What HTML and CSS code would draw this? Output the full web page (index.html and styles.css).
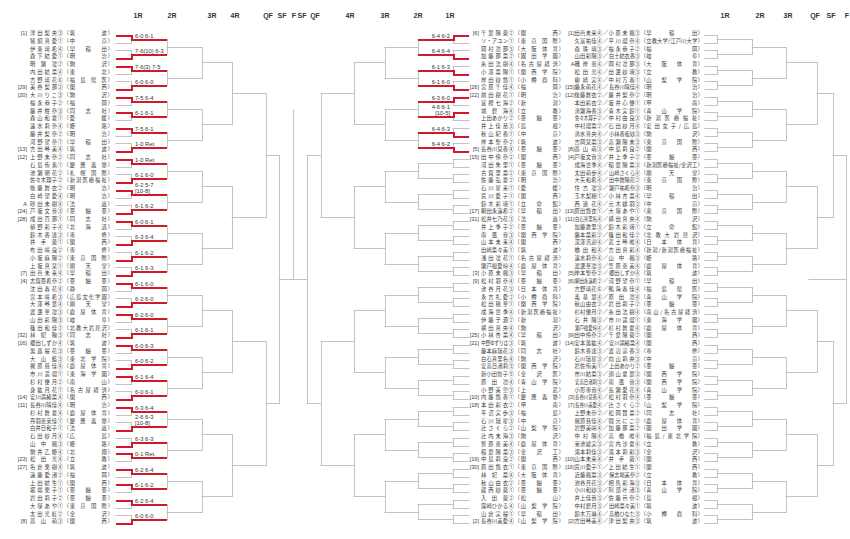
FILE: index.html
```html
<!DOCTYPE html>
<html lang="ja">
<head>
<meta charset="utf-8">
<title>トーナメント表</title>
<link rel="stylesheet" href="styles.css">
</head>
<body>
<main class="sheet">

<ol class="draw draw-left">
<li class="row"><span class="sd">[1]</span><span class="nm">津田梨央</span><span class="gr">③</span><span class="sc">（<span class="sch">筑波</span>）</span></li>
<li class="row"><span class="sd"></span><span class="nm">猪飼真愛</span><span class="gr">①</span><span class="sc">（<span class="sch">中京</span>）</span></li>
<li class="row"><span class="sd"></span><span class="nm">伊東璃希</span><span class="gr">④</span><span class="sc">（<span class="sch">早稲田</span>）</span></li>
<li class="row"><span class="sd"></span><span class="nm">森下結愛</span><span class="gr">①</span><span class="sc">（<span class="sch">明治</span>）</span></li>
<li class="row"><span class="sd"></span><span class="nm">明瀬凜</span><span class="gr">②</span><span class="sc">（<span class="sch">駒沢</span>）</span></li>
<li class="row"><span class="sd"></span><span class="nm">内田結菜</span><span class="gr">④</span><span class="sc">（<span class="sch">東北</span>）</span></li>
<li class="row"><span class="sd"></span><span class="nm">吉野璃花</span><span class="gr">⑥</span><span class="sc">（<span class="sch">福島県医</span>）</span></li>
<li class="row"><span class="sd">[29]</span><span class="nm">美谷梨那</span><span class="gr">③</span><span class="sc">（<span class="sch">関西</span>）</span></li>
<li class="row"><span class="sd">[20]</span><span class="nm">大川りこ</span><span class="gr">③</span><span class="sc">（<span class="sch">駒沢</span>）</span></li>
<li class="row"><span class="sd"></span><span class="nm">福永恭子</span><span class="gr">②</span><span class="sc">（<span class="sch">福岡</span>）</span></li>
<li class="row"><span class="sd"></span><span class="nm">藤井柑奈</span><span class="gr">③</span><span class="sc">（<span class="sch">同志社</span>）</span></li>
<li class="row"><span class="sd"></span><span class="nm">森山和夏</span><span class="gr">①</span><span class="sc">（<span class="sch">愛媛</span>）</span></li>
<li class="row"><span class="sd"></span><span class="nm">速水莉奈</span><span class="gr">④</span><span class="sc">（<span class="sch">姫路</span>）</span></li>
<li class="row"><span class="sd"></span><span class="nm">藤井梨奈</span><span class="gr">②</span><span class="sc">（<span class="sch">明治</span>）</span></li>
<li class="row"><span class="sd"></span><span class="nm">河野望奈</span><span class="gr">①</span><span class="sc">（<span class="sch">早稲田</span>）</span></li>
<li class="row"><span class="sd">[13]</span><span class="nm">吉田琴美</span><span class="gr">④</span><span class="sc">（<span class="sch">筑波</span>）</span></li>
<li class="row"><span class="sd">[12]</span><span class="nm">上野未奈</span><span class="gr">②</span><span class="sc">（<span class="sch">同志社</span>）</span></li>
<li class="row"><span class="sd"></span><span class="nm">石島侑素</span><span class="gr">①</span><span class="sc">（<span class="sch">慶應義塾</span>）</span></li>
<li class="row"><span class="sd"></span><span class="nm">池瀬朝花</span><span class="gr">②</span><span class="sc">（<span class="sch">札幌国際</span>）</span></li>
<li class="row"><span class="sd"></span><span class="nm">佐々木理子</span><span class="gr">②</span><span class="sc">（<span class="sch">新潟医療福祉</span>）</span></li>
<li class="row"><span class="sd"></span><span class="nm">後藤舞衣</span><span class="gr">②</span><span class="sc">（<span class="sch">明治</span>）</span></li>
<li class="row"><span class="sd"></span><span class="nm">白崎望愛</span><span class="gr">④</span><span class="sc">（<span class="sch">明治</span>）</span></li>
<li class="row"><span class="sd">A</span><span class="nm">砂田未樹</span><span class="gr">④</span><span class="sc">（<span class="sch">法政</span>）</span></li>
<li class="row"><span class="sd">[24]</span><span class="nm">戸坂文音</span><span class="gr">③</span><span class="sc">（<span class="sch">亜細亜</span>）</span></li>
<li class="row"><span class="sd">[28]</span><span class="nm">成田百那</span><span class="gr">①</span><span class="sc">（<span class="sch">同志社</span>）</span></li>
<li class="row"><span class="sd"></span><span class="nm">植野彩子</span><span class="gr">④</span><span class="sc">（<span class="sch">北海道</span>）</span></li>
<li class="row"><span class="sd"></span><span class="nm">鈴木香達</span><span class="gr">③</span><span class="sc">（<span class="sch">専修</span>）</span></li>
<li class="row"><span class="sd"></span><span class="nm">井手葵</span><span class="gr">①</span><span class="sc">（<span class="sch">関西</span>）</span></li>
<li class="row"><span class="sd"></span><span class="nm">布田咲良</span><span class="gr">②</span><span class="sc">（<span class="sch">専修</span>）</span></li>
<li class="row"><span class="sd"></span><span class="nm">小坂麻陽</span><span class="gr">②</span><span class="sc">（<span class="sch">東京国際</span>）</span></li>
<li class="row"><span class="sd"></span><span class="nm">上坂真栞</span><span class="gr">①</span><span class="sc">（<span class="sch">順天堂</span>）</span></li>
<li class="row"><span class="sd">[7]</span><span class="nm">田邑未来</span><span class="gr">④</span><span class="sc">（<span class="sch">早稲田</span>）</span></li>
<li class="row"><span class="sd">[4]</span><span class="nm">志賀亜希奈</span><span class="gr">②</span><span class="sc">（<span class="sch">亜細亜</span>）</span></li>
<li class="row"><span class="sd"></span><span class="nm">沈田春花</span><span class="gr">④</span><span class="sc">（<span class="sch">静岡</span>）</span></li>
<li class="row"><span class="sd"></span><span class="nm">宮本咲希</span><span class="gr">③</span><span class="sc">（<span class="sch">広島文化学園</span>）</span></li>
<li class="row"><span class="sd"></span><span class="nm">大澤琴葉</span><span class="gr">④</span><span class="sc">（<span class="sch">順天堂</span>）</span></li>
<li class="row"><span class="sd"></span><span class="nm">渡邊華凜</span><span class="gr">③</span><span class="sc">（<span class="sch">鹿屋体育</span>）</span></li>
<li class="row"><span class="sd"></span><span class="nm">山田彩陽</span><span class="gr">③</span><span class="sc">（<span class="sch">岐阜</span>）</span></li>
<li class="row"><span class="sd"></span><span class="nm">篠田和佳</span><span class="gr">②</span><span class="sc">（<span class="sch">北教大岩見沢</span>）</span></li>
<li class="row"><span class="sd">[32]</span><span class="nm">林妃鞠</span><span class="gr">③</span><span class="sc">（<span class="sch">同志社</span>）</span></li>
<li class="row"><span class="sd">[16]</span><span class="nm">櫻田しずか</span><span class="gr">④</span><span class="sc">（<span class="sch">筑波</span>）</span></li>
<li class="row"><span class="sd"></span><span class="nm">萬蕗桜花</span><span class="gr">③</span><span class="sc">（<span class="sch">亜細亜</span>）</span></li>
<li class="row"><span class="sd"></span><span class="nm">大山藍</span><span class="gr">③</span><span class="sc">（<span class="sch">東北学院</span>）</span></li>
<li class="row"><span class="sd"></span><span class="nm">梶原慈佳</span><span class="gr">④</span><span class="sc">（<span class="sch">鹿屋体育</span>）</span></li>
<li class="row"><span class="sd"></span><span class="nm">市川遥瑠</span><span class="gr">①</span><span class="sc">（<span class="sch">東海学園</span>）</span></li>
<li class="row"><span class="sd"></span><span class="nm">杉村優月</span><span class="gr">②</span><span class="sc">（<span class="sch">南山</span>）</span></li>
<li class="row"><span class="sd"></span><span class="nm">身紘月花</span><span class="gr">①</span><span class="sc">（<span class="sch">名古屋経済</span>）</span></li>
<li class="row"><span class="sd">[14]</span><span class="nm">安川満緒菜</span><span class="gr">④</span><span class="sc">（<span class="sch">関西</span>）</span></li>
<li class="row"><span class="sd">[11]</span><span class="nm">長谷川晴佳</span><span class="gr">④</span><span class="sc">（<span class="sch">明治</span>）</span></li>
<li class="row"><span class="sd"></span><span class="nm">杉村舞夏</span><span class="gr">④</span><span class="sc">（<span class="sch">鹿屋体育</span>）</span></li>
<li class="row"><span class="sd"></span><span class="nm">丹羽恵茉佳</span><span class="gr">①</span><span class="sc">（<span class="sch">慶應義塾</span>）</span></li>
<li class="row"><span class="sd"></span><span class="nm">白井日和子</span><span class="gr">①</span><span class="sc">（<span class="sch">法政</span>）</span></li>
<li class="row"><span class="sd"></span><span class="nm">石田紗月</span><span class="gr">④</span><span class="sc">（<span class="sch">広島</span>）</span></li>
<li class="row"><span class="sd"></span><span class="nm">山中楓</span><span class="gr">③</span><span class="sc">（<span class="sch">姫路</span>）</span></li>
<li class="row"><span class="sd"></span><span class="nm">駒井乙姫</span><span class="gr">④</span><span class="sc">（<span class="sch">北翔</span>）</span></li>
<li class="row"><span class="sd">[23]</span><span class="nm">松田光</span><span class="gr">④</span><span class="sc">（<span class="sch">立教</span>）</span></li>
<li class="row"><span class="sd">[27]</span><span class="nm">名倉栗樹</span><span class="gr">④</span><span class="sc">（<span class="sch">筑波</span>）</span></li>
<li class="row"><span class="sd"></span><span class="nm">遠藤愛渚</span><span class="gr">②</span><span class="sc">（<span class="sch">福岡</span>）</span></li>
<li class="row"><span class="sd"></span><span class="nm">上田結生</span><span class="gr">①</span><span class="sc">（<span class="sch">関西</span>）</span></li>
<li class="row"><span class="sd"></span><span class="nm">堀端栗子</span><span class="gr">①</span><span class="sc">（<span class="sch">亜細亜</span>）</span></li>
<li class="row"><span class="sd"></span><span class="nm">岩田莉子</span><span class="gr">②</span><span class="sc">（<span class="sch">亜細亜</span>）</span></li>
<li class="row"><span class="sd"></span><span class="nm">大塚あや</span><span class="gr">①</span><span class="sc">（<span class="sch">東京国際</span>）</span></li>
<li class="row"><span class="sd"></span><span class="nm">太田光紅</span><span class="gr">②</span><span class="sc">（<span class="sch">金沢</span>）</span></li>
<li class="row"><span class="sd">[8]</span><span class="nm">髙山萌</span><span class="gr">③</span><span class="sc">（<span class="sch">関西</span>）</span></li>
</ol>

<svg class="lines lines-main" id="main-lines" width="338" height="539" viewBox="114 0 338 539">
  <g class="rounds">
    <text x="138" y="18">1R</text><text x="172" y="18">2R</text><text x="212" y="18">3R</text><text x="235" y="18">4R</text>
    <text x="268" y="18">QF</text><text x="282" y="18">SF</text><text x="294" y="18">F</text><text x="302" y="18">SF</text>
    <text x="315" y="18">QF</text><text x="350" y="18">4R</text><text x="385" y="18">3R</text><text x="418" y="18">2R</text><text x="450" y="18">1R</text>
  </g>
  <g class="grid" data-stub="116" data-xs="131,167,202,232,266,279,293"></g>
  <g class="grid" data-stub="469" data-xs="453,418,385,354,321,307,293"></g>
  <path class="gl" d="M293.5 110V279.5"/>
  <g class="win"></g>
  <g class="scores" data-stub="116" data-x0="131" data-x1="167">
    <text x="135" data-m="0" data-w="0">6-0 6-1</text>
    <text x="135" data-m="1" data-w="1">7-6(10) 6-3</text>
    <text x="135" data-m="2" data-w="0">7-6(3) 7-5</text>
    <text x="135" data-m="3" data-w="1">6-0 6-0</text>
    <text x="135" data-m="4" data-w="0">7-5 6-4</text>
    <text x="135" data-m="5" data-w="0">6-1 6-1</text>
    <text x="135" data-m="6" data-w="0">7-5 6-1</text>
    <text x="135" data-m="7" data-w="1">1-0 Ret.</text>
    <text x="135" data-m="8" data-w="0">1-0 Ret.</text>
    <text x="135" data-m="9" data-w="1">6-1 6-0</text>
    <text x="135" data-m="10" data-w="0"><tspan>6-2 5-7</tspan><tspan>[10-8]</tspan></text>
    <text x="135" data-m="11" data-w="1">6-1 6-2</text>
    <text x="135" data-m="12" data-w="0">6-0 6-1</text>
    <text x="135" data-m="13" data-w="1">6-3 6-4</text>
    <text x="135" data-m="14" data-w="1">6-1 6-2</text>
    <text x="135" data-m="15" data-w="1">6-1 6-3</text>
    <text x="135" data-m="16" data-w="0">6-1 6-0</text>
    <text x="135" data-m="17" data-w="1">6-2 6-0</text>
    <text x="135" data-m="18" data-w="0">6-2 6-0</text>
    <text x="135" data-m="19" data-w="1">6-1 6-1</text>
    <text x="135" data-m="20" data-w="0">6-0 6-3</text>
    <text x="135" data-m="21" data-w="1">6-0 6-2</text>
    <text x="135" data-m="22" data-w="0">6-1 6-4</text>
    <text x="135" data-m="23" data-w="1">6-0 6-1</text>
    <text x="135" data-m="24" data-w="0">6-3 6-4</text>
    <text x="135" data-m="25" data-w="1"><tspan>2-6 6-3</tspan><tspan>[10-8]</tspan></text>
    <text x="135" data-m="26" data-w="1">6-3 6-3</text>
    <text x="135" data-m="27" data-w="0">0-1 Ret.</text>
    <text x="135" data-m="28" data-w="0">6-2 6-4</text>
    <text x="135" data-m="29" data-w="0">6-1 6-2</text>
    <text x="135" data-m="30" data-w="0">6-2 6-4</text>
    <text x="135" data-m="31" data-w="1">6-0 6-0</text>
  </g>
  <g class="scores scores-end" data-stub="469" data-x0="453" data-x1="418">
    <text x="450" data-m="0" data-w="0">6-4 6-2</text>
    <text x="450" data-m="1" data-w="1">6-4 6-4</text>
    <text x="450" data-m="2" data-w="1">6-1 6-3</text>
    <text x="450" data-m="3" data-w="1">6-1 6-0</text>
    <text x="450" data-m="4" data-w="0">6-3 6-0</text>
    <text x="450" data-m="5" data-w="0"><tspan>4-6 6-1</tspan><tspan>[10-5]</tspan></text>
    <text x="450" data-m="6" data-w="1">6-4 6-3</text>
    <text x="450" data-m="7" data-w="1">6-4 6-2</text>
  </g>
</svg>

<ol class="draw draw-mid">
<li class="row"><span class="sd">[6]</span><span class="nm">千葉陽葵</span><span class="gr">②</span><span class="sc">（<span class="sch">関西</span>）</span></li>
<li class="row"><span class="sd"></span><span class="nm">ソ・アユン</span><span class="gr">①</span><span class="sc">（<span class="sch">東京国際</span>）</span></li>
<li class="row"><span class="sd"></span><span class="nm">岡村凛那</span><span class="gr">③</span><span class="sc">（<span class="sch">大阪体育</span>）</span></li>
<li class="row"><span class="sd"></span><span class="nm">加藤那菜</span><span class="gr">②</span><span class="sc">（<span class="sch">園田学園</span>）</span></li>
<li class="row"><span class="sd"></span><span class="nm">糸田法樹</span><span class="gr">④</span><span class="sc">（<span class="sch">名古屋経済</span>）</span></li>
<li class="row"><span class="sd"></span><span class="nm">小澤菜陽</span><span class="gr">①</span><span class="sc">（<span class="sch">関西学院</span>）</span></li>
<li class="row"><span class="sd"></span><span class="nm">岸田紗悠</span><span class="gr">①</span><span class="sc">（<span class="sch">小樽商科</span>）</span></li>
<li class="row"><span class="sd">[26]</span><span class="nm">宮原千佳</span><span class="gr">④</span><span class="sc">（<span class="sch">福岡</span>）</span></li>
<li class="row"><span class="sd">[22]</span><span class="nm">前田樹花</span><span class="gr">①</span><span class="sc">（<span class="sch">明治</span>）</span></li>
<li class="row"><span class="sd"></span><span class="nm">富樫七海</span><span class="gr">②</span><span class="sc">（<span class="sch">新潟</span>）</span></li>
<li class="row"><span class="sd"></span><span class="nm">城碧海</span><span class="gr">④</span><span class="sc">（<span class="sch">立教</span>）</span></li>
<li class="row"><span class="sd"></span><span class="nm">上田あかり</span><span class="gr">②</span><span class="sc">（<span class="sch">亜細亜</span>）</span></li>
<li class="row"><span class="sd"></span><span class="nm">井上佳苗</span><span class="gr">③</span><span class="sc">（<span class="sch">島根</span>）</span></li>
<li class="row"><span class="sd"></span><span class="nm">秋山紀香</span><span class="gr">①</span><span class="sc">（<span class="sch">中京</span>）</span></li>
<li class="row"><span class="sd"></span><span class="nm">岸本聖奈</span><span class="gr">②</span><span class="sc">（<span class="sch">筑波</span>）</span></li>
<li class="row"><span class="sd">[5]</span><span class="nm">長谷川栞香</span><span class="gr">④</span><span class="sc">（<span class="sch">亜細亜</span>）</span></li>
<li class="row"><span class="sd">[15]</span><span class="nm">田中伶奈</span><span class="gr">②</span><span class="sc">（<span class="sch">関西</span>）</span></li>
<li class="row"><span class="sd"></span><span class="nm">河田朱里</span><span class="gr">①</span><span class="sc">（<span class="sch">亜細亜</span>）</span></li>
<li class="row"><span class="sd"></span><span class="nm">古賀里菜</span><span class="gr">②</span><span class="sc">（<span class="sch">東京国際</span>）</span></li>
<li class="row"><span class="sd"></span><span class="nm">佐藤弘夏</span><span class="gr">②</span><span class="sc">（<span class="sch">明治</span>）</span></li>
<li class="row"><span class="sd"></span><span class="nm">石川星来</span><span class="gr">①</span><span class="sc">（<span class="sch">愛媛</span>）</span></li>
<li class="row"><span class="sd"></span><span class="nm">荒川愛子</span><span class="gr">①</span><span class="sc">（<span class="sch">関西</span>）</span></li>
<li class="row"><span class="sd"></span><span class="nm">鈴木彩瑛</span><span class="gr">①</span><span class="sc">（<span class="sch">立命館</span>）</span></li>
<li class="row"><span class="sd">[17]</span><span class="nm">網田永遠希</span><span class="gr">②</span><span class="sc">（<span class="sch">早稲田</span>）</span></li>
<li class="row"><span class="sd">[31]</span><span class="nm">松井七乃花</span><span class="gr">③</span><span class="sc">（<span class="sch">法政</span>）</span></li>
<li class="row"><span class="sd"></span><span class="nm">井上季子</span><span class="gr">②</span><span class="sc">（<span class="sch">亜細亜</span>）</span></li>
<li class="row"><span class="sd"></span><span class="nm">南風音</span><span class="gr">③</span><span class="sc">（<span class="sch">関西学院</span>）</span></li>
<li class="row"><span class="sd"></span><span class="nm">山本未来</span><span class="gr">④</span><span class="sc">（<span class="sch">関西</span>）</span></li>
<li class="row"><span class="sd"></span><span class="nm">田崎菜々美</span><span class="gr">①</span><span class="sc">（<span class="sch">筑波</span>）</span></li>
<li class="row"><span class="sd"></span><span class="nm">浅田凜花</span><span class="gr">①</span><span class="sc">（<span class="sch">名古屋経済</span>）</span></li>
<li class="row"><span class="sd"></span><span class="nm">瀬戸根愛玲</span><span class="gr">④</span><span class="sc">（<span class="sch">鹿屋体育</span>）</span></li>
<li class="row"><span class="sd">[3]</span><span class="nm">小原未楓</span><span class="gr">③</span><span class="sc">（<span class="sch">早稲田</span>）</span></li>
<li class="row"><span class="sd">[9]</span><span class="nm">松村羽奈</span><span class="gr">④</span><span class="sc">（<span class="sch">亜細亜</span>）</span></li>
<li class="row"><span class="sd"></span><span class="nm">池谷月花</span><span class="gr">③</span><span class="sc">（<span class="sch">日本体育</span>）</span></li>
<li class="row"><span class="sd"></span><span class="nm">永吉礼愛</span><span class="gr">②</span><span class="sc">（<span class="sch">小樽商科</span>）</span></li>
<li class="row"><span class="sd"></span><span class="nm">松田穂華</span><span class="gr">①</span><span class="sc">（<span class="sch">関西学院</span>）</span></li>
<li class="row"><span class="sd"></span><span class="nm">成海世季</span><span class="gr">④</span><span class="sc">（<span class="sch">新潟医療福祉</span>）</span></li>
<li class="row"><span class="sd"></span><span class="nm">伊藤于源</span><span class="gr">②</span><span class="sc">（<span class="sch">新潟</span>）</span></li>
<li class="row"><span class="sd"></span><span class="nm">横田真央</span><span class="gr">④</span><span class="sc">（<span class="sch">駒沢</span>）</span></li>
<li class="row"><span class="sd">[25]</span><span class="nm">小林杏菜</span><span class="gr">④</span><span class="sc">（<span class="sch">早稲田</span>）</span></li>
<li class="row"><span class="sd">[21]</span><span class="nm">中野ゆずりは</span><span class="gr">③</span><span class="sc">（<span class="sch">筑波</span>）</span></li>
<li class="row"><span class="sd"></span><span class="nm">藤本麻瑞花</span><span class="gr">③</span><span class="sc">（<span class="sch">同志社</span>）</span></li>
<li class="row"><span class="sd"></span><span class="nm">白石真里名</span><span class="gr">④</span><span class="sc">（<span class="sch">駒沢</span>）</span></li>
<li class="row"><span class="sd"></span><span class="nm">安高日渚莉</span><span class="gr">③</span><span class="sc">（<span class="sch">関西学院</span>）</span></li>
<li class="row"><span class="sd"></span><span class="nm">新小田智子</span><span class="gr">⑤</span><span class="sc">（<span class="sch">金沢医</span>）</span></li>
<li class="row"><span class="sd"></span><span class="nm">原田凛</span><span class="gr">④</span><span class="sc">（<span class="sch">青山学院</span>）</span></li>
<li class="row"><span class="sd"></span><span class="nm">小野美空</span><span class="gr">③</span><span class="sc">（<span class="sch">上武</span>）</span></li>
<li class="row"><span class="sd">[10]</span><span class="nm">内藤悠香</span><span class="gr">①</span><span class="sc">（<span class="sch">慶應義塾</span>）</span></li>
<li class="row"><span class="sd">[18]</span><span class="nm">本田彩衣</span><span class="gr">②</span><span class="sc">（<span class="sch">甲南</span>）</span></li>
<li class="row"><span class="sd"></span><span class="nm">平沼実歩</span><span class="gr">③</span><span class="sc">（<span class="sch">福島</span>）</span></li>
<li class="row"><span class="sd"></span><span class="nm">石川瑞星</span><span class="gr">③</span><span class="sc">（<span class="sch">中京</span>）</span></li>
<li class="row"><span class="sd"></span><span class="nm">辻さくら</span><span class="gr">②</span><span class="sc">（<span class="sch">山梨学院</span>）</span></li>
<li class="row"><span class="sd"></span><span class="nm">辻内未海</span><span class="gr">③</span><span class="sc">（<span class="sch">駒沢</span>）</span></li>
<li class="row"><span class="sd"></span><span class="nm">笹原恵美</span><span class="gr">④</span><span class="sc">（<span class="sch">鹿屋体育</span>）</span></li>
<li class="row"><span class="sd"></span><span class="nm">稲葉陽菜</span><span class="gr">③</span><span class="sc">（<span class="sch">金沢工</span>）</span></li>
<li class="row"><span class="sd">[19]</span><span class="nm">中島莉良</span><span class="gr">②</span><span class="sc">（<span class="sch">関西</span>）</span></li>
<li class="row"><span class="sd">[30]</span><span class="nm">原田悠衣</span><span class="gr">①</span><span class="sc">（<span class="sch">東京国際</span>）</span></li>
<li class="row"><span class="sd"></span><span class="nm">林妃菜</span><span class="gr">④</span><span class="sc">（<span class="sch">大阪体育</span>）</span></li>
<li class="row"><span class="sd"></span><span class="nm">秋山由衣</span><span class="gr">②</span><span class="sc">（<span class="sch">亜細亜</span>）</span></li>
<li class="row"><span class="sd"></span><span class="nm">蔵西紗葵</span><span class="gr">①</span><span class="sc">（<span class="sch">亜細亜</span>）</span></li>
<li class="row"><span class="sd"></span><span class="nm">入田葵</span><span class="gr">②</span><span class="sc">（<span class="sch">松山</span>）</span></li>
<li class="row"><span class="sd"></span><span class="nm">露崎ひかる</span><span class="gr">④</span><span class="sc">（<span class="sch">山梨学院</span>）</span></li>
<li class="row"><span class="sd"></span><span class="nm">山倉実桜</span><span class="gr">①</span><span class="sc">（<span class="sch">早稲田</span>）</span></li>
<li class="row"><span class="sd">[2]</span><span class="nm">長谷川美愛</span><span class="gr">④</span><span class="sc">（<span class="sch">山梨学院</span>）</span></li>
</ol>

<ol class="draw draw-dbl">
<li class="row"><span class="sd">[1]</span><span class="nm">田邑未来</span><span class="gr">④</span><span class="sl">／</span><span class="nm nm2">小原未楓</span><span class="gr">③</span><span class="sc">（<span class="sch">早稲田</span>）</span></li>
<li class="row"><span class="sd"></span><span class="nm">久富祐佳</span><span class="gr">④</span><span class="sl">／</span><span class="nm nm2">平川瑠奈</span><span class="gr">④</span><span class="sc">（<span class="sch">立教大学/江戸川大学</span>）</span></li>
<li class="row"><span class="sd"></span><span class="nm">森珠璃</span><span class="gr">③</span><span class="sl">／</span><span class="nm nm2">福永恭子</span><span class="gr">②</span><span class="sc">（<span class="sch">福岡</span>）</span></li>
<li class="row"><span class="sd"></span><span class="nm">山田彩陽</span><span class="gr">③</span><span class="sl">／</span><span class="nm nm2">白土結衣香</span><span class="gr">③</span><span class="sc">（<span class="sch">岐阜</span>）</span></li>
<li class="row"><span class="sd">A</span><span class="nm">磯岸恵</span><span class="gr">④</span><span class="sl">／</span><span class="nm nm2">岡村凛那</span><span class="gr">③</span><span class="sc">（<span class="sch">大阪体育</span>）</span></li>
<li class="row"><span class="sd"></span><span class="nm">松田光</span><span class="gr">④</span><span class="sl">／</span><span class="nm nm2">田邊紗瑛</span><span class="gr">③</span><span class="sc">（<span class="sch">立教</span>）</span></li>
<li class="row"><span class="sd"></span><span class="nm">柳綺実</span><span class="gr">④</span><span class="sl">／</span><span class="nm nm2">中村万春</span><span class="gr">①</span><span class="sc">（<span class="sch">山梨学院</span>）</span></li>
<li class="row"><span class="sd">[15]</span><span class="nm">藤永萌花</span><span class="gr">④</span><span class="sl">／</span><span class="nm nm2">長谷川晴佳</span><span class="gr">④</span><span class="sc">（<span class="sch">明治</span>）</span></li>
<li class="row"><span class="sd">[12]</span><span class="nm">後藤舞衣</span><span class="gr">②</span><span class="sl">／</span><span class="nm nm2">藤井梨奈</span><span class="gr">②</span><span class="sc">（<span class="sch">明治</span>）</span></li>
<li class="row"><span class="sd"></span><span class="nm">本田彩衣</span><span class="gr">②</span><span class="sl">／</span><span class="nm nm2">坂井心優</span><span class="gr">①</span><span class="sc">（<span class="sch">甲南</span>）</span></li>
<li class="row"><span class="sd"></span><span class="nm">清瀬海香</span><span class="gr">③</span><span class="sl">／</span><span class="nm nm2">青木実鈴</span><span class="gr">①</span><span class="sc">（<span class="sch">青山学院</span>）</span></li>
<li class="row"><span class="sd"></span><span class="nm">佐々木理子</span><span class="gr">②</span><span class="sl">／</span><span class="nm nm2">中村由良</span><span class="gr">③</span><span class="sc">（<span class="sch">新潟医療福祉</span>）</span></li>
<li class="row"><span class="sd"></span><span class="nm">中村瑠菜</span><span class="gr">②</span><span class="sl">／</span><span class="nm nm2">石田紗月</span><span class="gr">④</span><span class="sc">（<span class="sch">安田女子/広島</span>）</span></li>
<li class="row"><span class="sd"></span><span class="nm">清水真央</span><span class="gr">④</span><span class="sl">／</span><span class="nm nm2">小林香蜜紗</span><span class="gr">③</span><span class="sc">（<span class="sch">駒沢</span>）</span></li>
<li class="row"><span class="sd"></span><span class="nm">吉岡栞菜</span><span class="gr">③</span><span class="sl">／</span><span class="nm nm2">高瀬陽未</span><span class="gr">③</span><span class="sc">（<span class="sch">東京国際</span>）</span></li>
<li class="row"><span class="sd">[8]</span><span class="nm">髙山萌</span><span class="gr">③</span><span class="sl">／</span><span class="nm nm2">中島莉良</span><span class="gr">②</span><span class="sc">（<span class="sch">関西</span>）</span></li>
<li class="row"><span class="sd">[4]</span><span class="nm">戸坂文音</span><span class="gr">③</span><span class="sl">／</span><span class="nm nm2">井上季子</span><span class="gr">②</span><span class="sc">（<span class="sch">亜細亜</span>）</span></li>
<li class="row"><span class="sd"></span><span class="nm">成海世季</span><span class="gr">④</span><span class="sl">／</span><span class="nm nm2">稲葉陽菜</span><span class="gr">③</span><span class="sc">（<span class="sch">新潟医療福祉/金沢工</span>）</span></li>
<li class="row"><span class="sd"></span><span class="nm">太田萌歩</span><span class="gr">④</span><span class="sl">／</span><span class="nm nm2">山崎さくら</span><span class="gr">④</span><span class="sc">（<span class="sch">順天堂</span>）</span></li>
<li class="row"><span class="sd"></span><span class="nm">大矢和希</span><span class="gr">④</span><span class="sl">／</span><span class="nm nm2">田中舞陽花</span><span class="gr">②</span><span class="sc">（<span class="sch">東京国際</span>）</span></li>
<li class="row"><span class="sd"></span><span class="nm">住吉凜</span><span class="gr">③</span><span class="sl">／</span><span class="nm nm2">瀬戸祐希奈</span><span class="gr">③</span><span class="sc">（<span class="sch">明治</span>）</span></li>
<li class="row"><span class="sd"></span><span class="nm">玉木梨穂</span><span class="gr">①</span><span class="sl">／</span><span class="nm nm2">小林杏菜</span><span class="gr">④</span><span class="sc">（<span class="sch">早稲田</span>）</span></li>
<li class="row"><span class="sd"></span><span class="nm">西連花</span><span class="gr">④</span><span class="sl">／</span><span class="nm nm2">元木緋羽</span><span class="gr">③</span><span class="sc">（<span class="sch">中京</span>）</span></li>
<li class="row"><span class="sd">[13]</span><span class="nm">原田悠衣</span><span class="gr">①</span><span class="sl">／</span><span class="nm nm2">大塚あや</span><span class="gr">①</span><span class="sc">（<span class="sch">東京国際</span>）</span></li>
<li class="row"><span class="sd">[11]</span><span class="nm">白石真里名</span><span class="gr">④</span><span class="sl">／</span><span class="nm nm2">横田真央</span><span class="gr">④</span><span class="sc">（<span class="sch">駒沢</span>）</span></li>
<li class="row"><span class="sd"></span><span class="nm">加藤歌里</span><span class="gr">③</span><span class="sl">／</span><span class="nm nm2">鈴木彩瑛</span><span class="gr">①</span><span class="sc">（<span class="sch">立命館</span>）</span></li>
<li class="row"><span class="sd"></span><span class="nm">藤本菜彩</span><span class="gr">②</span><span class="sl">／</span><span class="nm nm2">篠田和佳</span><span class="gr">②</span><span class="sc">（<span class="sch">北教大岩見沢</span>）</span></li>
<li class="row"><span class="sd"></span><span class="nm">深澤汎迎</span><span class="gr">④</span><span class="sl">／</span><span class="nm nm2">武士琴唯</span><span class="gr">④</span><span class="sc">（<span class="sch">日本体育</span>）</span></li>
<li class="row"><span class="sd"></span><span class="nm">橋田和</span><span class="gr">④</span><span class="sl">／</span><span class="nm nm2">吉田真彩</span><span class="gr">④</span><span class="sc">（<span class="sch">新潟/新潟医療福祉</span>）</span></li>
<li class="row"><span class="sd"></span><span class="nm">速水莉奈</span><span class="gr">④</span><span class="sl">／</span><span class="nm nm2">山中楓</span><span class="gr">③</span><span class="sc">（<span class="sch">姫路</span>）</span></li>
<li class="row"><span class="sd"></span><span class="nm">渡邊華凜</span><span class="gr">③</span><span class="sl">／</span><span class="nm nm2">笠原恵美</span><span class="gr">④</span><span class="sc">（<span class="sch">鹿屋体育</span>）</span></li>
<li class="row"><span class="sd">[5]</span><span class="nm">岸本聖奈</span><span class="gr">②</span><span class="sl">／</span><span class="nm nm2">櫻田しずか</span><span class="gr">④</span><span class="sc">（<span class="sch">筑波</span>）</span></li>
<li class="row"><span class="sd">[6]</span><span class="nm">網田永遠希</span><span class="gr">②</span><span class="sl">／</span><span class="nm nm2">河野望奈</span><span class="gr">①</span><span class="sc">（<span class="sch">早稲田</span>）</span></li>
<li class="row"><span class="sd"></span><span class="nm">吉野璃花</span><span class="gr">⑥</span><span class="sl">／</span><span class="nm nm2">鴨海春佳</span><span class="gr">④</span><span class="sc">（<span class="sch">福島県医</span>）</span></li>
<li class="row"><span class="sd"></span><span class="nm">義基慧</span><span class="gr">④</span><span class="sl">／</span><span class="nm nm2">原田凛</span><span class="gr">④</span><span class="sc">（<span class="sch">青山学院</span>）</span></li>
<li class="row"><span class="sd"></span><span class="nm">秋山由衣</span><span class="gr">②</span><span class="sl">／</span><span class="nm nm2">岩田莉子</span><span class="gr">②</span><span class="sc">（<span class="sch">亜細亜</span>）</span></li>
<li class="row"><span class="sd"></span><span class="nm">杉村優月</span><span class="gr">②</span><span class="sl">／</span><span class="nm nm2">糸田法樹</span><span class="gr">④</span><span class="sc">（<span class="sch">南山/名古屋経済</span>）</span></li>
<li class="row"><span class="sd"></span><span class="nm">石井陽</span><span class="gr">③</span><span class="sl">／</span><span class="nm nm2">市川遥瑠</span><span class="gr">①</span><span class="sc">（<span class="sch">東海学園</span>）</span></li>
<li class="row"><span class="sd"></span><span class="nm">瀬戸根愛玲</span><span class="gr">④</span><span class="sl">／</span><span class="nm nm2">杉村舞夏</span><span class="gr">④</span><span class="sc">（<span class="sch">鹿屋体育</span>）</span></li>
<li class="row"><span class="sd">[9]</span><span class="nm">田中伶奈</span><span class="gr">②</span><span class="sl">／</span><span class="nm nm2">千葉陽葵</span><span class="gr">②</span><span class="sc">（<span class="sch">関西</span>）</span></li>
<li class="row"><span class="sd">[14]</span><span class="nm">安本萬紘</span><span class="gr">④</span><span class="sl">／</span><span class="nm nm2">安川満緒菜</span><span class="gr">④</span><span class="sc">（<span class="sch">関西</span>）</span></li>
<li class="row"><span class="sd"></span><span class="nm">鈴木香達</span><span class="gr">③</span><span class="sl">／</span><span class="nm nm2">渡辺涼香</span><span class="gr">③</span><span class="sc">（<span class="sch">専修</span>）</span></li>
<li class="row"><span class="sd"></span><span class="nm">石川瑞星</span><span class="gr">③</span><span class="sl">／</span><span class="nm nm2">向山莉央</span><span class="gr">③</span><span class="sc">（<span class="sch">中京</span>）</span></li>
<li class="row"><span class="sd"></span><span class="nm">岩佐侑美</span><span class="gr">①</span><span class="sl">／</span><span class="nm nm2">上田あかり</span><span class="gr">②</span><span class="sc">（<span class="sch">亜細亜</span>）</span></li>
<li class="row"><span class="sd"></span><span class="nm">市川結菜</span><span class="gr">③</span><span class="sl">／</span><span class="nm nm2">須山夏葉</span><span class="gr">③</span><span class="sc">（<span class="sch">関西学院</span>）</span></li>
<li class="row"><span class="sd"></span><span class="nm">安高日渚莉</span><span class="gr">③</span><span class="sl">／</span><span class="nm nm2">南風音</span><span class="gr">③</span><span class="sc">（<span class="sch">関西学院</span>）</span></li>
<li class="row"><span class="sd"></span><span class="nm">小形専音</span><span class="gr">④</span><span class="sl">／</span><span class="nm nm2">長瀬愛花</span><span class="gr">④</span><span class="sc">（<span class="sch">青山学院</span>）</span></li>
<li class="row"><span class="sd">[3]</span><span class="nm">長谷川栞香</span><span class="gr">④</span><span class="sl">／</span><span class="nm nm2">松村羽奈</span><span class="gr">④</span><span class="sc">（<span class="sch">亜細亜</span>）</span></li>
<li class="row"><span class="sd">[7]</span><span class="nm">長谷川美愛</span><span class="gr">④</span><span class="sl">／</span><span class="nm nm2">辻さくら</span><span class="gr">②</span><span class="sc">（<span class="sch">山梨学院</span>）</span></li>
<li class="row"><span class="sd"></span><span class="nm">上野未奈</span><span class="gr">②</span><span class="sl">／</span><span class="nm nm2">松岡賢菜</span><span class="gr">②</span><span class="sc">（<span class="sch">同志社</span>）</span></li>
<li class="row"><span class="sd"></span><span class="nm">梶原慈佳</span><span class="gr">④</span><span class="sl">／</span><span class="nm nm2">間元にこ</span><span class="gr">②</span><span class="sc">（<span class="sch">鹿屋体育</span>）</span></li>
<li class="row"><span class="sd"></span><span class="nm">岩野美咲</span><span class="gr">④</span><span class="sl">／</span><span class="nm nm2">加藤那菜</span><span class="gr">②</span><span class="sc">（<span class="sch">園田学園</span>）</span></li>
<li class="row"><span class="sd"></span><span class="nm">中村陽</span><span class="gr">④</span><span class="sl">／</span><span class="nm nm2">高橋唯</span><span class="gr">④</span><span class="sc">（<span class="sch">福島/東北学院</span>）</span></li>
<li class="row"><span class="sd"></span><span class="nm">菊池綾実</span><span class="gr">③</span><span class="sl">／</span><span class="nm nm2">宮内沙夏</span><span class="gr">④</span><span class="sc">（<span class="sch">立教</span>）</span></li>
<li class="row"><span class="sd"></span><span class="nm">滝本莉佳</span><span class="gr">③</span><span class="sl">／</span><span class="nm nm2">滝本莉彩</span><span class="gr">③</span><span class="sc">（<span class="sch">金沢</span>）</span></li>
<li class="row"><span class="sd">[10]</span><span class="nm">山本未来</span><span class="gr">④</span><span class="sl">／</span><span class="nm nm2">井手葵</span><span class="gr">①</span><span class="sc">（<span class="sch">関西</span>）</span></li>
<li class="row"><span class="sd">[16]</span><span class="nm">荒川愛子</span><span class="gr">①</span><span class="sl">／</span><span class="nm nm2">上田結生</span><span class="gr">①</span><span class="sc">（<span class="sch">関西</span>）</span></li>
<li class="row"><span class="sd"></span><span class="nm">近藤楓菜</span><span class="gr">③</span><span class="sl">／</span><span class="nm nm2">保志場美奈</span><span class="gr">②</span><span class="sc">（<span class="sch">立教</span>）</span></li>
<li class="row"><span class="sd"></span><span class="nm">池谷月花</span><span class="gr">③</span><span class="sl">／</span><span class="nm nm2">相馬彩海</span><span class="gr">③</span><span class="sc">（<span class="sch">日本体育</span>）</span></li>
<li class="row"><span class="sd"></span><span class="nm">小川和紗</span><span class="gr">③</span><span class="sl">／</span><span class="nm nm2">阿部叶渚</span><span class="gr">③</span><span class="sc">（<span class="sch">青山学院</span>）</span></li>
<li class="row"><span class="sd"></span><span class="nm">井上佳苗</span><span class="gr">③</span><span class="sl">／</span><span class="nm nm2">佐藤芭奈</span><span class="gr">②</span><span class="sc">（<span class="sch">島根</span>）</span></li>
<li class="row"><span class="sd"></span><span class="nm">中村碧月</span><span class="gr">③</span><span class="sl">／</span><span class="nm nm2">田崎菜々美</span><span class="gr">①</span><span class="sc">（<span class="sch">筑波</span>）</span></li>
<li class="row"><span class="sd"></span><span class="nm">鈴木万琳</span><span class="gr">④</span><span class="sl">／</span><span class="nm nm2">高橋ひなた</span><span class="gr">③</span><span class="sc">（<span class="sch">小樽商科</span>）</span></li>
<li class="row"><span class="sd">[2]</span><span class="nm">吉田琴美</span><span class="gr">④</span><span class="sl">／</span><span class="nm nm2">津田梨央</span><span class="gr">③</span><span class="sc">（<span class="sch">筑波</span>）</span></li>
</ol>

<svg class="lines lines-dbl" id="dbl-lines" width="144" height="539" viewBox="706 0 144 539">
  <g class="rounds">
    <text x="725" y="18">1R</text><text x="760" y="18">2R</text><text x="788" y="18">3R</text>
    <text x="815" y="18">QF</text><text x="831" y="18">SF</text><text x="847" y="18">F</text>
  </g>
  <g class="grid" data-stub="705" data-xs="717,752,786,817,833,846"></g>
  <path class="gl" d="M809 279.5H846"/>
</svg>

</main>
<script src="script.js"></script>
</body>
</html>
```

FILE: styles.css
```css
* { box-sizing: border-box; }

html, body {
  margin: 0;
  background: #fff;
}

.sheet {
  display: flex;
  align-items: flex-start;
  width: 850px;
  height: 539px;
  overflow: hidden;
  color: #3a3a3a;
  font-family: "Noto Sans CJK JP", "Noto Sans", sans-serif;
}

.draw {
  list-style: none;
  margin: 0;
  padding: 30px 0 0;
  flex: 0 0 auto;
}

.draw-left { width: 114px; }
.draw-mid { width: 113px; padding-left: 16px; }
.draw-dbl { width: 141px; }

.row {
  display: flex;
  align-items: center;
  height: 7.75px;
  line-height: 7.75px;
  font-size: 5.3px;
  white-space: nowrap;
}

.row > span { flex: 0 0 auto; }

.sd {
  font-family: "Liberation Sans", sans-serif;
  font-size: 5.6px;
  text-align: right;
  color: #444;
}

.draw-left .sd { width: 27px; margin-right: 3px; }
.draw-mid .sd { width: 11px; margin-right: 2px; }

.nm,
.sch {
  text-align: justify;
  text-align-last: justify;
  transform-origin: 0 50%;
  white-space: nowrap;
}

.nm { width: 27px; }
.gr { width: 6.5px; text-align: center; }

.sc {
  display: flex;
  justify-content: space-between;
  width: 49.5px;
}

.sch { display: block; width: 37px; }

/* doubles */
.draw-dbl .sd { width: 9.5px; margin-right: 0; }
.draw-dbl .nm { width: 22px; }
.draw-dbl .nm2 { width: 26px; }
.draw-dbl .gr { width: 6px; }
.sl { width: 6px; text-align: center; }
.draw-dbl .sc { width: 62.5px; }
.draw-dbl .sch { width: 51px; }

/* bracket lines */
.lines {
  display: block;
  flex: 0 0 auto;
  overflow: visible;
}

.gl {
  fill: none;
  stroke: #c3c3c3;
  stroke-width: 1;
  stroke-linecap: square;
}

.rl {
  fill: none;
  stroke: #d01a2c;
  stroke-width: 2;
  stroke-linecap: butt;
  stroke-linejoin: miter;
}

.rounds text {
  font-family: "Liberation Sans", sans-serif;
  font-weight: bold;
  font-size: 7px;
  fill: #333;
  text-anchor: middle;
}

.scores text {
  font-family: "Liberation Sans", sans-serif;
  font-size: 5.8px;
  fill: #333;
}

.scores-end text { text-anchor: end; }
```

FILE: script.js
```js
(function () {
  var NS = 'http://www.w3.org/2000/svg';
  var P = 7.75, Y0 = 34.9;
  function ry(i) { return Y0 + P * i; }
  function px(v) { return Math.round(v) + 0.5; }

  function addPath(parent, d, cls) {
    var p = document.createElementNS(NS, 'path');
    p.setAttribute('d', d);
    p.setAttribute('class', cls);
    parent.appendChild(p);
  }

  /* gray draw lines */
  document.querySelectorAll('g.grid').forEach(function (g) {
    var stub = +g.dataset.stub;
    var xs = g.dataset.xs.split(',').map(Number);
    var ys = [], d = '', i, r, k;
    for (i = 0; i < 64; i++) ys.push(ry(i));
    ys.forEach(function (y) { d += 'M' + stub + ' ' + px(y) + 'H' + xs[0]; });
    for (r = 0; r < 6; r++) {
      var nx = [];
      for (k = 0; k < ys.length; k += 2) {
        var a = ys[k], b = ys[k + 1], m = (a + b) / 2;
        d += 'M' + px(xs[r]) + ' ' + px(a) + 'V' + px(b);
        if (r + 1 < xs.length) d += 'M' + xs[r] + ' ' + px(m) + 'H' + xs[r + 1];
        nx.push(m);
      }
      ys = nx;
    }
    addPath(g, d, 'gl');
  });

  /* first-round results: red winner path + score placement */
  document.querySelectorAll('g.scores').forEach(function (g) {
    var svg = g.ownerSVGElement;
    var win = svg.querySelector('g.win');
    var stub = +g.dataset.stub, x0 = +g.dataset.x0, x1 = +g.dataset.x1;
    var d = '';
    g.querySelectorAll('text').forEach(function (t) {
      var k = +t.dataset.m, w = +t.dataset.w;
      var a = ry(2 * k), b = ry(2 * k + 1), m = (a + b) / 2;
      var Y = Math.round(w ? b : a) + 1, M = Math.round(m) + 1, X = x0 + 1;
      d += 'M' + stub + ' ' + Y + 'H' + X + 'V' + M + 'H' + x1;
      var base = Math.round(m) - 0.6;
      var x = t.getAttribute('x');
      var parts = t.querySelectorAll('tspan');
      if (parts.length) {
        parts.forEach(function (s, i) {
          s.setAttribute('x', x);
          s.setAttribute('y', base - (parts.length - 1 - i) * 6.7);
        });
      } else {
        t.setAttribute('y', base);
      }
    });
    addPath(win, d, 'rl');
  });

  /* squeeze names / schools that are longer than their field */
  document.querySelectorAll('.nm, .sch').forEach(function (e) {
    var w = e.getBoundingClientRect().width;
    e.style.width = 'max-content';
    var n = e.getBoundingClientRect().width;
    e.style.width = '';
    if (n > w + 0.2) {
      e.style.width = n + 'px';
      e.style.marginRight = (w - n) + 'px';
      e.style.transform = 'scaleX(' + (w / n).toFixed(3) + ')';
    }
  });
})();
```
